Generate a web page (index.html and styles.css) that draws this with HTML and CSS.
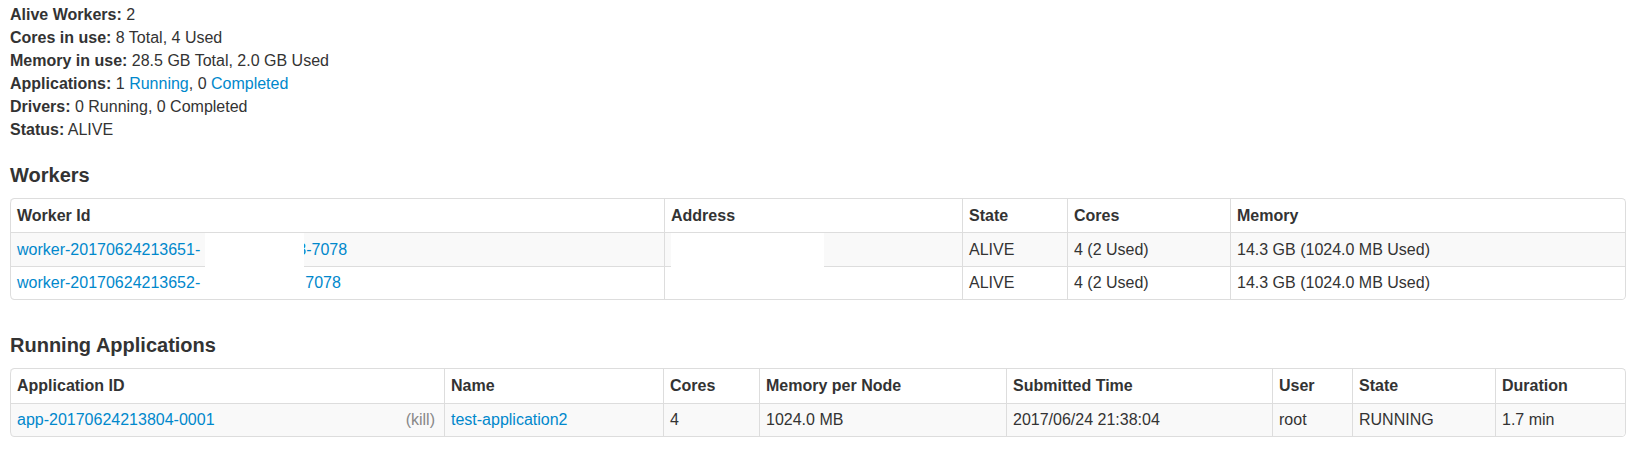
FILE: index.html
```html
<!DOCTYPE html>
<html>
<head>
<meta charset="utf-8">
<link rel="stylesheet" href="styles.css">
</head>
<body>
<div class="page">
  <ul class="summary">
    <li><strong>Alive Workers:</strong> 2</li>
    <li><strong>Cores in use:</strong> 8 Total, 4 Used</li>
    <li><strong>Memory in use:</strong> 28.5 GB Total, 2.0 GB Used</li>
    <li><strong>Applications:</strong> 1 <a href="#running-app">Running</a>, 0 <a href="#completed-app">Completed</a></li>
    <li><strong>Drivers:</strong> 0 Running, 0 Completed</li>
    <li><strong>Status:</strong> ALIVE</li>
  </ul>

  <h4>Workers</h4>
  <table class="table">
    <colgroup>
      <col class="w-id"><col class="w-addr"><col class="w-state"><col class="w-cores"><col class="w-mem">
    </colgroup>
    <thead>
      <tr><th>Worker Id</th><th>Address</th><th>State</th><th>Cores</th><th>Memory</th></tr>
    </thead>
    <tbody>
      <tr>
        <td class="cell-rel"><a href="#">worker-20170624213651-<span class="gap gap-1"></span>3-7078</a><span class="redact redact-id"></span></td>
        <td class="cell-rel"><span class="redact redact-addr"></span></td>
        <td>ALIVE</td>
        <td>4 (2 Used)</td>
        <td>14.3 GB (1024.0 MB Used)</td>
      </tr>
      <tr>
        <td><a href="#">worker-20170624213652-<span class="gap gap-2"></span>7078</a></td>
        <td></td>
        <td>ALIVE</td>
        <td>4 (2 Used)</td>
        <td>14.3 GB (1024.0 MB Used)</td>
      </tr>
    </tbody>
  </table>

  <h4>Running Applications</h4>
  <table class="table">
    <colgroup>
      <col class="a-id"><col class="a-name"><col class="a-cores"><col class="a-mem"><col class="a-time"><col class="a-user"><col class="a-state"><col class="a-dur">
    </colgroup>
    <thead>
      <tr><th>Application ID</th><th>Name</th><th>Cores</th><th>Memory per Node</th><th>Submitted Time</th><th>User</th><th>State</th><th>Duration</th></tr>
    </thead>
    <tbody>
      <tr>
        <td class="app-id"><a href="#">app-20170624213804-0001</a><a class="kill" href="#">(kill)</a></td>
        <td><a href="#">test-application2</a></td>
        <td>4</td>
        <td>1024.0 MB</td>
        <td>2017/06/24 21:38:04</td>
        <td>root</td>
        <td>RUNNING</td>
        <td>1.7 min</td>
      </tr>
    </tbody>
  </table>
</div>
</body>
</html>
```

FILE: styles.css
```css
body {
  margin: 0;
  background: #fff;
  color: #333;
  font-family: "Liberation Sans", Arial, sans-serif;
  font-size: 16px;
  line-height: 23px;
}

.page {
  padding: 3px 0 0 10px;
  width: 1615px;
}

.summary {
  list-style: none;
  margin: 0 0 11.5px;
  padding: 0;
}

a {
  color: #0088cc;
  text-decoration: none;
}

h4 {
  margin: 22.5px 0 11.5px;
  font-size: 20px;
  line-height: 23px;
  font-weight: bold;
  color: #333;
}

.table {
  width: 1615px;
  table-layout: fixed;
  border-collapse: separate;
  border-spacing: 0;
  border: 1px solid #ddd;
  border-left: 0;
  border-radius: 4.6px;
  margin: 0 0 34px;
}

.table th,
.table td {
  padding: 4.6px 6px;
  line-height: 23px;
  text-align: left;
  vertical-align: top;
  border-left: 1px solid #ddd;
  border-top: 1px solid #ddd;
  white-space: nowrap;
}

.table th {
  font-weight: bold;
  padding-top: 5.2px;
  padding-bottom: 5.2px;
}

.table thead tr:first-child th {
  border-top: 0;
}

.table thead tr:first-child th:first-child {
  border-top-left-radius: 4.6px;
}

.table tbody tr:last-child td:first-child {
  border-bottom-left-radius: 4.6px;
}

.table tbody tr:last-child td:last-child {
  border-bottom-right-radius: 4.6px;
}

.table tbody tr:nth-child(odd) td {
  background: #f9f9f9;
}

.w-id { width: 654px; }
.w-addr { width: 298px; }
.w-state { width: 105px; }
.w-cores { width: 163px; }
.w-mem { width: 395px; }

.a-id { width: 434px; }
.a-name { width: 219px; }
.a-cores { width: 96px; }
.a-mem { width: 247px; }
.a-time { width: 266px; }
.a-user { width: 80px; }
.a-state { width: 143px; }
.a-dur { width: 130px; }

.gap {
  display: inline-block;
}

.gap-1 { width: 97px; }
.gap-2 { width: 105px; }

.cell-rel {
  position: relative;
}

.redact {
  position: absolute;
  top: 0;
  background: #fff;
}

.redact-id {
  left: 194px;
  width: 99px;
  height: 66px;
}

.redact-addr {
  left: 6px;
  width: 153px;
  height: 34px;
}

.kill {
  float: right;
  color: #888;
  padding-right: 3px;
}
```
